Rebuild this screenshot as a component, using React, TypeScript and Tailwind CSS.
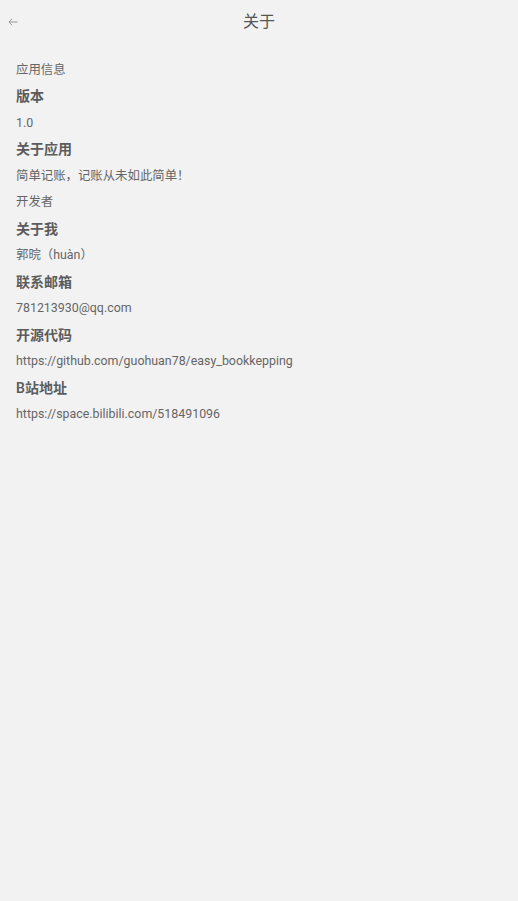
import React from "react";

const FONT = { fontFamily: 'Roboto, "Noto Sans CJK SC", sans-serif' };

const rows: { text: string; bold?: boolean }[] = [
  { text: "应用信息" },
  { text: "版本", bold: true },
  { text: "1.0" },
  { text: "关于应用", bold: true },
  { text: "简单记账，记账从未如此简单！" },
  { text: "开发者" },
  { text: "关于我", bold: true },
  { text: "郭晥（huàn）" },
  { text: "联系邮箱", bold: true },
  { text: "781213930@qq.com" },
  { text: "开源代码", bold: true },
  { text: "https://github.com/guohuan78/easy_bookkepping" },
  { text: "B站地址", bold: true },
  { text: "https://space.bilibili.com/518491096" },
];

export default function App() {
  return (
    <div className="w-[518px] h-[901px] bg-[#f2f2f2] text-[#666]" style={FONT}>
      {/* Top bar */}
      <div className="relative h-[44px] flex items-center justify-center">
        <button className="absolute left-[6px] top-[14px] w-[14px] h-[16px] flex items-center justify-center text-[#999]">
          <svg width="10" height="8" viewBox="0 0 10 8" fill="none" stroke="currentColor" strokeWidth="1">
            <path d="M9.5 4H1M4 0.8L1 4l3 3.2" />
          </svg>
        </button>
        <span className="text-[16px] text-[#555] leading-none">关于</span>
      </div>

      {/* Content */}
      <div className="flex flex-col pt-[13px] px-[16px]">
        {rows.map((r, i) => (
          <div
            key={i}
            className={`h-[26.5px] flex items-center whitespace-nowrap ${
              r.bold ? "text-[14px] font-semibold text-[#5c5c5c]" : "text-[12.4px] text-[#666]"
            }`}
          >
            {r.text}
          </div>
        ))}
      </div>
    </div>
  );
}
